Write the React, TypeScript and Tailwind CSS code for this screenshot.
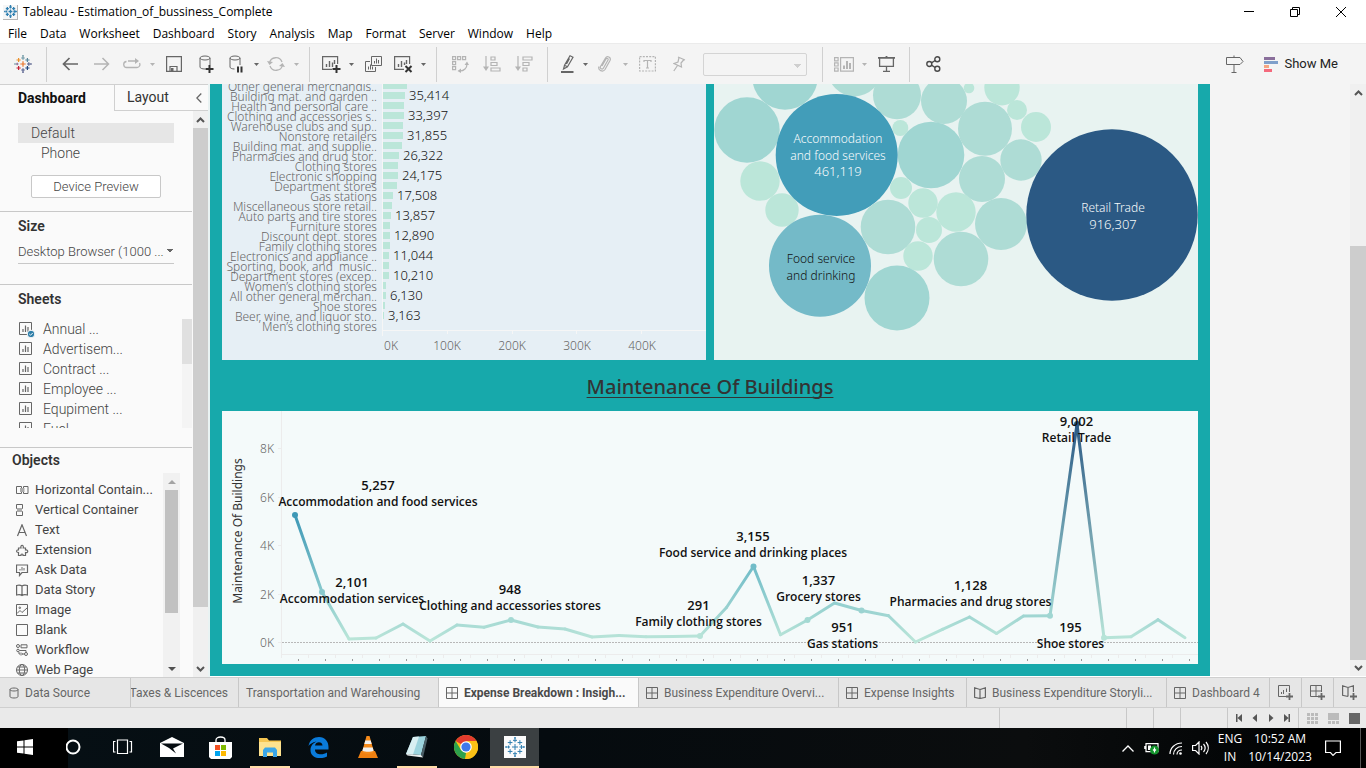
import type { ReactNode } from 'react';

/* ---------- shared icon helpers ---------- */

type Plus = [number, number, number, string];

function Pluses({ size, items, sw = 1.2 }: { size: number; items: Plus[]; sw?: number }) {
  return (
    <svg width={size} height={size} viewBox="0 0 18 18" aria-hidden="true">
      {items.map(([x, y, r, c], i) => (
        <path key={i} d={`M${x - r} ${y}h${2 * r}M${x} ${y - r}v${2 * r}`} stroke={c} strokeWidth={sw} />
      ))}
    </svg>
  );
}

const colorLogo: Plus[] = [
  [9, 9, 2.7, '#e8762c'],
  [9, 3, 1.8, '#7099a6'],
  [9, 15, 1.8, '#5b6591'],
  [3.2, 9, 1.3, '#8c6f96'],
  [14.8, 9, 1.8, '#5b6591'],
  [4.6, 5, 2.1, '#eb912c'],
  [13.4, 5, 2.1, '#59879b'],
  [4.6, 13, 2.1, '#c72035'],
  [13.4, 13, 2.1, '#1f457e'],
  [1, 9, 0.8, '#7099a6'],
  [17, 9, 0.8, '#5b6591'],
  [9, 0.8, 0.8, '#7099a6'],
  [9, 17.2, 0.8, '#5b6591'],
];
const blueLogo: Plus[] = colorLogo.map(([x, y, r]) => [x, y, r, '#2f7fb0']);

function Icon({
  w = 18,
  h = 18,
  c = '#666',
  sw = 1,
  children,
}: {
  w?: number;
  h?: number;
  c?: string;
  sw?: number;
  children: ReactNode;
}) {
  return (
    <svg
      width={w}
      height={h}
      viewBox={`0 0 ${w} ${h}`}
      fill="none"
      stroke={c}
      strokeWidth={sw}
      aria-hidden="true"
      className="shrink-0"
    >
      {children}
    </svg>
  );
}

const DIM = '#b4b4b4';
const INK = '#666666';

function Tool({ label, narrow, tight, children }: { label: string; narrow?: boolean; tight?: boolean; children: ReactNode }) {
  return (
    <button
      aria-label={label}
      className={`flex h-8 shrink-0 items-center justify-center ${tight ? 'w-6' : narrow ? 'w-7' : 'w-8'}`}
    >
      {children}
    </button>
  );
}

function Caret({ c = INK, label }: { c?: string; label: string }) {
  return (
    <button aria-label={label} className="flex h-8 w-3 shrink-0 items-center justify-center">
      <svg width="5" height="3" viewBox="0 0 5 3" aria-hidden="true">
        <path d="M0 0h5L2.5 3z" fill={c} />
      </svg>
    </button>
  );
}

const Sep = () => <div className="mx-[7px] h-[35px] w-px shrink-0 bg-[#d0d0d0]" />;

/* ---------- title, menu, toolbar ---------- */

function TitleBar() {
  return (
    <header className="flex h-6 shrink-0 items-center bg-white pr-px pl-[3px] font-['Open_Sans',sans-serif] text-[12px] text-black">
      <span className="flex size-[15px] items-center justify-center border-r border-b border-[#b5b5b5] bg-[#f6f6f6]">
        <Pluses size={13} items={blueLogo} sw={1.8} />
      </span>
      <h1 className="ml-[5px] flex-1 text-[12px]">Tableau - Estimation_of_bussiness_Complete</h1>
      <button aria-label="Minimize" className="flex h-5 w-[46px] items-center justify-center">
        <Icon w={10} h={10} c="#000"><path d="M0 4.5h10" /></Icon>
      </button>
      <button aria-label="Restore" className="flex h-5 w-[45px] items-center justify-center">
        <Icon w={10} h={10} c="#000"><path d="M.5 2.5h7v7h-7zM2.500 2.500v-2h7v7h-2" /></Icon>
      </button>
      <button aria-label="Close" className="flex h-5 w-12 items-center justify-center">
        <Icon w={10} h={10} c="#000"><path d="M0 0l10 10M10 0L0 10" /></Icon>
      </button>
    </header>
  );
}

const menus = ['File', 'Data', 'Worksheet', 'Dashboard', 'Story', 'Analysis', 'Map', 'Format', 'Server', 'Window', 'Help'];

function MenuBar() {
  return (
    <nav className="flex h-[19px] shrink-0 items-center gap-[13px] bg-white pl-2 font-['Open_Sans',sans-serif] text-[12px] text-black">
      {menus.map((m) => (
        <button key={m} className="shrink-0">{m}</button>
      ))}
    </nav>
  );
}

function Toolbar() {
  return (
    <div className="flex h-[41px] shrink-0 items-center border-t border-[#ebebeb] bg-[#f4f4f4] pr-7 pl-[7px]">
      <Tool label="Start page"><Pluses size={18} items={colorLogo} /></Tool>
      <Sep />
      <Tool label="Back">
        <Icon w={16} h={14} sw={1.7}><path d="M16 7H1.5M7.5 1L1.5 7l6 6" /></Icon>
      </Tool>
      <Tool label="Forward">
        <Icon w={16} h={14} c={DIM} sw={1.5}><path d="M0 7h14.5M8.5 1l6 6-6 6" /></Icon>
      </Tool>
      <Tool label="Replay" narrow>
        <Icon w={18} h={12} c={DIM} sw={1.3}>
          <path d="M3.500 3.500a3 3 0 0 0 .5 6h10a3 3 0 0 0 2.500-4.500M5 3h8" />
          <path d="M12 0l4 3-4 3z" fill={DIM} stroke="none" />
        </Icon>
      </Tool>
      <Caret c={DIM} label="Replay options" />
      <Tool label="Save">
        <Icon w={16} h={16} sw={1.2}>
          <path d="M.6.6h14.8v14.8H.6zM4 15v-4.500h7V15" />
          <path d="M5 12h2.5v3H5z" fill={INK} stroke="none" />
        </Icon>
      </Tool>
      <Tool label="New data source">
        <Icon w={16} h={18}>
          <path d="M2 3c0-1 2-2 5-2s5 1 5 2-2 2-5 2-5-1-5-2v9c0 1.200 2 2 5 2M12 3v7" />
          <path d="M11.500 10v8M7.500 14h8" stroke="#333" strokeWidth="2" />
        </Icon>
      </Tool>
      <Tool label="Pause auto updates" narrow>
        <Icon w={16} h={18}>
          <path d="M2 3c0-1 2-2 5-2s5 1 5 2-2 2-5 2-5-1-5-2v9c0 1.200 2 2 4.500 2M12 3v7" />
          <path d="M10 11.500v6M13.500 11.500v6" stroke="#333" strokeWidth="2" />
        </Icon>
      </Tool>
      <Caret label="Auto update options" />
      <Tool label="Run update" narrow>
        <Icon w={18} h={16} c={DIM} sw={1.3}>
          <path d="M2.500 7a6.500 6.500 0 0 1 12.500-1M15.500 9A6.500 6.500 0 0 1 3 10" />
          <path d="M0 5l2.500 4L6 6zM18 11l-2.500-4L12 10z" fill={DIM} stroke="none" />
        </Icon>
      </Tool>
      <Caret c={DIM} label="Update options" />
      <Sep />
      <Tool label="New worksheet" narrow>
        <Icon w={19} h={18} sw={1.2}>
          <path d="M10 14.400H.6V1.600h15V9" />
          <path d="M4.500 12V9M7.500 12V6M10.500 12V7.500M12.500 9V5" strokeWidth="1.400" />
          <path d="M14.500 10v8M10.500 14h8" stroke="#333" strokeWidth="2" />
        </Icon>
      </Tool>
      <Caret label="New sheet options" />
      <Tool label="Duplicate">
        <Icon w={17} h={16}>
          <path d="M6.500.5h10v9h-10zM5 5.500H.5v10h10V11M3.500 13.500v-3M5.500 13.500v-5M7.500 13.500v-3M9.500 7.500V5M11.500 7.500v-5M13.500 7.500V4" />
        </Icon>
      </Tool>
      <Tool label="Clear sheet" narrow>
        <Icon w={19} h={18} sw={1.2}>
          <path d="M10 14.400H.6V1.600h15V9" />
          <path d="M4.500 12V9M7.500 12V6M10.500 10V7.500M12.500 9V5" strokeWidth="1.400" />
          <path d="M11.500 11l6 6M17.500 11l-6 6" stroke="#333" strokeWidth="2" />
        </Icon>
      </Tool>
      <Caret label="Clear options" />
      <Sep />
      <Tool label="Swap rows and columns">
        <Icon w={17} h={17} c={DIM} sw={1.2}>
          <path d="M.6.6h3v3h-3zM5.600.6h3v3h-3zM10.600.6h3v3h-3zM.6 5.600h3v3h-3zM.6 10.600h3v3h-3zM15 8c0 4-3 7-7 7" />
          <path d="M12.500 9L15 5.500 17 9zM9 12.500L5.500 15 9 17z" fill={DIM} stroke="none" />
        </Icon>
      </Tool>
      <Tool label="Sort ascending">
        <Icon w={18} h={16} c={DIM} sw={1.2}>
          <path d="M3 0v12M8 1h4v3H8zM8 6.500h6v3H8zM8 12h9v3H8z" />
          <path d="M0 10.500h6L3 15z" fill={DIM} stroke="none" />
        </Icon>
      </Tool>
      <Tool label="Sort descending">
        <Icon w={18} h={16} c={DIM} sw={1.2}>
          <path d="M3 0v12M8 1h9v3H8zM8 6.500h6v3H8zM8 12h4v3H8z" />
          <path d="M0 10.500h6L3 15z" fill={DIM} stroke="none" />
        </Icon>
      </Tool>
      <Sep />
      <Tool label="Highlight" tight>
        <Icon w={13} h={18} sw={1.2}>
          <path d="M9 .8l3 1.500-5.500 9.500-3-1.500zM3.500 10.300L2.500 14l4-2.200M8.500 3.500l-3 5.500" />
          <path d="M0 17h12.500" strokeWidth="2" />
        </Icon>
      </Tool>
      <Caret label="Highlight options" />
      <Tool label="Group members" narrow>
        <Icon w={14} h={16} c={DIM} sw={1.2}>
          <path d="M4 10l4-7c.8-1.300 2.600-.4 2 1L5.500 12c-1 2-4 .6-3-1.500L7.500 2c1.500-2.500 6-.8 4.500 2.500L7 13.500C5 16.500-.5 14.500 1 10.500" />
        </Icon>
      </Tool>
      <Caret c={DIM} label="Group options" />
      <Tool label="Show mark labels">
        <Icon w={17} h={16} c={DIM} sw={1.2}>
          <path d="M.6.6h15.800v14.400H.6z" strokeDasharray="2 1.200" />
          <path d="M5 6V4.500h7V6M8.500 4.500v7.500M7 12h3" />
        </Icon>
      </Tool>
      <Tool label="Fix axes">
        <Icon w={13} h={16} c={DIM} sw={1.2}>
          <path d="M5 1l7 3M6 1.500L5 6 1 7.500l7.500 3.500L8 7l3-3.500M4.500 9.500L.8 15" />
        </Icon>
      </Tool>
      <select
        aria-label="Fit"
        disabled
        className="mx-2 h-[23px] w-[104px] shrink-0 appearance-none rounded-xs border border-[#d4d4d4] bg-[#f4f4f4] bg-[linear-gradient(135deg,#cfcfcf_50%,transparent_50%),linear-gradient(225deg,#cfcfcf_50%,transparent_50%)] bg-[length:4px_4px] bg-[position:94px_10px,90px_10px] bg-no-repeat"
      />
      <Sep />
      <Tool label="Show or hide cards" narrow>
        <Icon w={20} h={15} c={DIM} sw={1.2}>
          <path d="M.6.6h3.500v3.200H.6zM.6 5.800h3.500V9H.6zM.6 11h3.500v3.200H.6zM6.600.6h12.800v13.600H6.600z" />
          <path d="M10 12V8.500M13 12V4M16 12V6" strokeWidth="2" />
        </Icon>
      </Tool>
      <Caret c={DIM} label="Card options" />
      <Tool label="Presentation mode">
        <Icon w={17} h={16} sw={1.3}>
          <path d="M1.600 2v8.400h13.800V2M8.500 10.500V15M5 15.300h7" />
          <path d="M0 1.800h17M8.500 0v2" strokeWidth="1.800" />
        </Icon>
      </Tool>
      <Sep />
      <Tool label="Share">
        <Icon w={15} h={16} c="#4a4a4a" sw={1.4}>
          <circle cx="3.300" cy="8" r="2.500" />
          <circle cx="11.300" cy="3.200" r="2.500" />
          <circle cx="11.300" cy="12.800" r="2.500" />
          <path d="M5.500 6.800l3.600-2.300M5.500 9.200l3.600 2.300" />
        </Icon>
      </Tool>
      <div className="flex-1" />
      <button aria-label="Guide" className="mr-5 flex h-8 items-center">
        <Icon w={19} h={18}>
          <path d="M1.500 2.500H15L18 6.500 15 9.500H1.500zM9 .5v2M9 9.500v8M6.500 17.500h5" />
        </Icon>
      </button>
      <button className="flex h-8 items-center gap-1.5 font-['Roboto',sans-serif] text-[13px] text-[#222]">
        <svg width="14" height="15" viewBox="0 0 14 15" aria-hidden="true">
          <path d="M0 0h11v3H0z" fill="#8a6f9b" />
          <path d="M0 4h14v3H0z" fill="#7f9fca" />
          <path d="M0 8h5v3H0z" fill="#f5a582" />
          <path d="M0 12h8v3H0z" fill="#f4697c" />
        </svg>
        Show Me
      </button>
    </div>
  );
}

/* ---------- scrollbars ---------- */

function Arrow({ up }: { up?: boolean }) {
  return (
    <Icon w={9} h={7} c="#555" sw={2}>
      <path d={up ? 'M1 6l3.500-3.500L8 6' : 'M1 1l3.500 3.500L8 1'} />
    </Icon>
  );
}

/* ---------- side panel ---------- */

function SheetIcon({ checked }: { checked?: boolean }) {
  return (
    <Icon w={16} h={17} c="#666">
      <path d="M.5 1.500h12v12H.5z" />
      <path d="M4 11V8M6.500 11V4.500M9 11V6" strokeWidth="1.200" />
      {checked && (
        <>
          <circle cx="12" cy="13" r="3.800" fill="#2e7ea8" stroke="#fafafa" />
          <path d="M10.300 13l1.200 1.200 2.200-2.200" stroke="#fff" />
        </>
      )}
    </Icon>
  );
}

const sheets = ['Annual ...', 'Advertisem...', 'Contract ...', 'Employee ...', 'Equpiment ...', 'Fuel ...'];

const objects: [string, ReactNode][] = [
  ['Horizontal Contain...', <><path d="M.5 2.500h5v7h-5zM7.500 2.500h4.500v7H7.500z" /><path d="M4 4h4.500v4H4z" fill="#aaa" stroke="none" /></>],
  ['Vertical Container', <><path d="M.5.5h6v4h-6zM.5 7.500h6v4h-6z" /><path d="M1 4h5v4H1z" fill="#aaa" stroke="none" /></>],
  ['Text', <path d="M1.500 12L6 .8 10.500 12M3 8.500h6" strokeWidth="1.200" />],
  ['Extension', <path d="M2.500 11.500v-3C0 8.800 0 5.500 2.500 5.800V4H5C4 .3 8.200.3 7.200 4H9.500v2c3-.8 3 3.500 0 2.500v3H7C7.500 9.500 4.500 9.500 5 11.500z" strokeWidth="1.200" />],
  ['Ask Data', <><path d="M.5 1h11v7.500H6L3.500 11.500v-3h-3z" strokeWidth="1.200" /><path d="M4 6.500V5M6 6.500V3M8 6.500V4" stroke="#999" strokeWidth="1.500" /></>],
  ['Data Story', <path d="M6 2C4.500 1 2.500 1 .6 1.500v9.500c2-.5 4-.5 5.400.5 1.400-1 3.400-1 5.400-.5V1.500C9.500 1 7.500 1 6 2zm0 0v9.500" strokeWidth="1.200" />],
  ['Image', <><path d="M.5.5h11v11H.5zM1 9.500l3-3 2 2 5-4.500" /><circle cx="3.800" cy="3.800" r=".8" /></>],
  ['Blank', <path d="M.5.5h11v11H.5z" />],
  ['Workflow', <><circle cx="2" cy="2" r="1.500" /><circle cx="2" cy="6.500" r="1.300" /><circle cx="10" cy="10" r="1.500" /><path d="M5 .8h6v3H5zM3.500 6.500H10v2M5 10H3V8M5 8.500L6.500 10 5 11.500M8.500 10H6" /></>],
  ['Web Page', <><circle cx="6" cy="6" r="5.500" /><ellipse cx="6" cy="6" rx="2.700" ry="5.500" /><path d="M.5 6h11M1.500 3h9M1.500 9h9" /></>],
];

function SidePanel() {
  return (
    <aside className="flex w-[210px] shrink-0 flex-col border-r-2 border-[#e9f3f3] bg-[#fafafa] font-['Roboto',sans-serif] text-[#444]">
      <div role="tablist" className="flex h-[27px] shrink-0 border-t border-[#d0d0d0]">
        <button role="tab" aria-selected="true" className="w-[114px] pl-[18px] text-left text-[14px] font-bold text-[#111]">
          Dashboard
        </button>
        <button role="tab" aria-selected="false" className="flex-1 border-b border-l border-[#d0d0d0] pl-3 text-left text-[14px] text-[#333]">
          Layout
        </button>
        <button aria-label="Collapse pane" className="border-b border-[#d0d0d0] pr-1.5">
          <Icon w={6} h={10} sw={1.3}><path d="M5.300.5L.8 5l4.500 4.500" /></Icon>
        </button>
      </div>
      <div className="flex min-h-0 flex-1">
        <div className="flex min-h-0 min-w-0 flex-1 flex-col overflow-hidden">
          <div className="flex shrink-0 flex-col border-b border-[#c8c8c8] pt-3 pr-[18px] pb-[13px] pl-[18px]">
            <button className="h-5 bg-[#e6e6e6] pl-[13px] text-left text-[14px] font-light">Default</button>
            <button className="h-5 pl-[23px] text-left text-[14px] font-light">Phone</button>
            <button className="mx-[13px] mt-3 h-[23px] rounded-xs border border-[#c8c8c8] bg-white text-[13px] font-light">Device Preview</button>
          </div>
          <div className="flex h-[73px] shrink-0 flex-col border-b border-[#c8c8c8] px-[18px] pt-1">
            <h2 id="size" className="text-[14px] leading-5 font-semibold text-[#333]">Size</h2>
            <select
              aria-labelledby="size"
              className="mt-1 h-6 appearance-none border-b border-[#c8c8c8] bg-[linear-gradient(135deg,#666_50%,transparent_50%),linear-gradient(225deg,#666_50%,transparent_50%)] bg-[length:4px_4px] bg-[position:152px_9px,148px_9px] bg-no-repeat text-[13px] font-light"
            >
              <option>Desktop Browser (1000 ...</option>
            </select>
          </div>
          <div className="h-[163px] shrink-0 border-b border-[#c8c8c8] pt-1">
            <h2 className="pl-[18px] text-[14px] leading-5 font-semibold text-[#333]">Sheets</h2>
            <div className="mt-2.5 flex h-[109px] overflow-hidden">
              <ul className="flex-1 pl-[19px]">
                {sheets.map((s, i) => (
                  <li key={s} className="flex h-5 items-center gap-2 text-[14px] font-light">
                    <SheetIcon checked={i === 0} />
                    {s}
                  </li>
                ))}
              </ul>
              <div className="w-2.5 bg-[#f4f4f4]"><div className="h-[45px] bg-[#e0e0e0]" /></div>
            </div>
          </div>
          <div className="flex min-h-0 flex-1">
            <div className="min-w-0 flex-1 overflow-hidden">
              <h2 className="mt-0.5 mb-2.5 pl-3 text-[14px] leading-5 font-semibold text-[#333]">Objects</h2>
              <ul className="pl-4">
                {objects.map(([name, art]) => (
                  <li key={name} className="flex h-5 items-center gap-1.5 text-[13px] whitespace-nowrap">
                    <Icon w={13} h={13}>{art}</Icon>
                    {name}
                  </li>
                ))}
              </ul>
            </div>
            <div className="mt-[25px] mr-3 flex w-[17px] flex-col items-center bg-[#f1f1f1]">
              <svg width="8" height="17" viewBox="0 0 8 17" aria-hidden="true"><path d="M0 11h8L4 7z" fill="#a3a3a3" /></svg>
              <div className="h-[123px] w-[13px] shrink-0 bg-[#c1c1c1]" />
              <div className="flex-1" />
              <svg width="8" height="17" viewBox="0 0 8 17" aria-hidden="true"><path d="M0 7h8L4 11z" fill="#505050" /></svg>
            </div>
          </div>
        </div>
        <div className="ml-px flex w-[15px] flex-col items-center bg-[#f0f0f0]">
          <div className="flex h-[17px] items-center"><Arrow up /></div>
          <div className="w-full flex-1 bg-[#cdcdcd]" />
          <div className="flex h-[70px] items-end pb-1"><Arrow /></div>
        </div>
      </div>
    </aside>
  );
}

/* ---------- bar chart ---------- */

const bars: [string, number, string?][] = [
  ['Other general merchandis..', 24],
  ['Building mat. and garden ..', 22, '35,414'],
  ['Health and personal care ..', 21],
  ['Clothing and accessories s..', 21, '33,397'],
  ['Warehouse clubs and sup..', 20],
  ['Nonstore retailers', 20, '31,855'],
  ['Building mat. and supplie..', 19],
  ['Pharmacies and drug stor..', 16, '26,322'],
  ['Clothing stores', 15],
  ['Electronic shopping', 15, '24,175'],
  ['Department stores', 14],
  ['Gas stations', 10, '17,508'],
  ['Miscellaneous store retail..', 9],
  ['Auto parts and tire stores', 8, '13,857'],
  ['Furniture stores', 7],
  ['Discount dept. stores', 7, '12,890'],
  ['Family clothing stores', 7],
  ['Electronics and appliance ..', 6, '11,044'],
  ['Sporting, book, and  music..', 6],
  ['Department stores (excep..', 6, '10,210'],
  ['Women’s clothing stores', 3],
  ['All other general merchan..', 3, '6,130'],
  ['Shoe stores', 2],
  ['Beer, wine, and liquor sto..', 1, '3,163'],
  ['Men’s clothing stores', 0],
];

function BarChart() {
  return (
    <section className="min-w-0 flex-1 bg-[#e6eff5]">
      <svg height="276" className="block w-full font-['Noto_Sans',sans-serif] text-[12px]" role="img" aria-label="Expenditure by business">
        <path d="M160.500 0v252M160 246.500h324M225.500 246v4M290.500 246v4M354.500 246v4M419.500 246v4" stroke="#f6f6f6" fill="none" />
        {bars.map(([name, w, value], i) => (
          <g key={name}>
            <text x="155" y={7 + i * 10} textAnchor="end" fill="#666" className="font-light whitespace-pre">{name}</text>
            <rect x="161" y={i * 10 - 2} width={w} height="7" fill="#bbe6d9" />
            {value && <text x={165 + w} y={6 + i * 10} fill="#111" className="text-[13px] font-light">{value}</text>}
          </g>
        ))}
        <g fill="#666" textAnchor="middle" className="font-light">
          {['0K', '100K', '200K', '300K', '400K'].map((t, i) => (
            <text key={t} x={i === 0 ? 169 : 160 + i * 65} y="266">{t}</text>
          ))}
        </g>
      </svg>
    </section>
  );
}

/* ---------- bubble chart ---------- */

const bubbles: [number, number, number, string][] = [
  [33, 46, 32.7, '#a0d6d2'],
  [71, -7, 32.7, '#a0d6d2'],
  [140.5, -14.3, 26.7, '#aedcd5'],
  [183, 11.3, 24, '#aedcd5'],
  [230, 17, 23, '#aedcd5'],
  [255, 4, 5.3, '#bbe6d9'],
  [288, 3.7, 17.7, '#bbe6d9'],
  [303, 26, 10, '#bbe6d9'],
  [322, 43, 15, '#bbe6d9'],
  [271, 44.7, 27, '#aedcd5'],
  [217, 71, 33.3, '#a0d6d2'],
  [186.3, 44, 8, '#bbe6d9'],
  [307, 76, 20.7, '#aedcd5'],
  [268, 95, 23, '#aedcd5'],
  [46, 97, 19.7, '#bbe6d9'],
  [68, 126, 16.7, '#bbe6d9'],
  [106, 181.7, 51, '#74bac8'],
  [122.7, 71, 61, '#429db9'],
  [187, 104, 11, '#bbe6d9'],
  [209, 119, 14.7, '#bbe6d9'],
  [242, 128, 19.7, '#bbe6d9'],
  [215, 146, 13, '#bbe6d9'],
  [174, 143, 27.3, '#aedcd5'],
  [204, 172, 14.7, '#bbe6d9'],
  [247, 175, 27.3, '#aedcd5'],
  [287, 140, 26, '#aedcd5'],
  [183, 214, 32.5, '#a0d6d2'],
  [398, 131, 85.7, '#2b5984'],
];

function BubbleChart() {
  return (
    <section className="min-w-0 flex-1 bg-[#e8f3f1]">
      <svg height="276" className="block w-full font-['Noto_Sans',sans-serif] text-[12px] font-light" role="img" aria-label="Expenditure bubbles">
        {bubbles.map(([x, y, r, c]) => (
          <circle key={`${x}-${y}`} cx={x} cy={y} r={r} fill={c} />
        ))}
        <g textAnchor="middle" fill="#f7fbfc">
          <text x="124" y="59">Accommodation</text>
          <text x="124" y="76">and food services</text>
          <text x="124" y="92" className="text-[13px]">461,119</text>
          <text x="399" y="128">Retail Trade</text>
          <text x="399" y="145" className="text-[13px]">916,307</text>
        </g>
        <g textAnchor="middle" fill="#111">
          <text x="107" y="179">Food service</text>
          <text x="107" y="196">and drinking</text>
        </g>
      </svg>
    </section>
  );
}

/* ---------- line chart ---------- */

const pts: [number, number][] = [
  [73, 104], [100, 181], [127, 228], [154, 227], [181, 213], [208, 230], [235, 214], [262, 216.3],
  [289, 209], [316, 216], [343, 218], [370, 226], [397, 224.5], [424, 225.7], [451, 225.5], [478, 225],
  [504.5, 196.5], [531.5, 155.5], [558.5, 223.7], [585.5, 209], [612.5, 192], [639.5, 199.5],
  [666.5, 204.7], [693.5, 231], [720.5, 218.3], [747.5, 206], [774.5, 222.5], [801.5, 205],
  [828, 204.7], [855, 13], [882, 226.7], [909, 225.7], [936, 208.7], [963, 226.7],
];
const marked = [0, 1, 8, 15, 17, 19, 21, 28, 29, 30];

const stops: [number, number[]][] = [
  [11, [43, 89, 132]],
  [104, [62, 152, 182]],
  [156, [112, 188, 200]],
  [205, [160, 214, 210]],
  [230, [187, 230, 217]],
];

function shade(y: number) {
  let i = 0;
  while (i < stops.length - 2 && y > stops[i + 1][0]) i++;
  const [y0, a] = stops[i];
  const [y1, b] = stops[i + 1];
  const t = Math.min(1, Math.max(0, (y - y0) / (y1 - y0)));
  return `rgb(${a.map((v, k) => Math.round(v + (b[k] - v) * t)).join(',')})`;
}

const notes: [number, number, string, string][] = [
  [156, 79, '5,257', 'Accommodation and food services'],
  [130, 176, '2,101', 'Accommodation services'],
  [288, 183, '948', 'Clothing and accessories stores'],
  [476.5, 199, '291', 'Family clothing stores'],
  [531, 130, '3,155', 'Food service and drinking places'],
  [596.5, 174, '1,337', 'Grocery stores'],
  [620.5, 221, '951', 'Gas stations'],
  [748.5, 179, '1,128', 'Pharmacies and drug stores'],
  [848.5, 221, '195', 'Shoe stores'],
  [854.5, 15, '9,002', 'Retail Trade'],
];

function LineChart() {
  return (
    <section className="bg-[#f4fafa]">
      <svg height="253" className="block w-full font-['Noto_Sans',sans-serif] text-[12px]" role="img" aria-label="Maintenance of buildings">
        <defs>
          {pts.slice(1).map(([x, y], i) => (
            <linearGradient key={i} id={`seg${i}`} gradientUnits="userSpaceOnUse" x1={pts[i][0]} y1={pts[i][1]} x2={x} y2={y}>
              <stop offset="0" stopColor={shade(pts[i][1])} />
              <stop offset="1" stopColor={shade(y)} />
            </linearGradient>
          ))}
        </defs>
        <path d="M59.500 0v247M56 37.500h3M56 86.500h3M56 134.500h3M56 183.500h3M56 231.500h3M59 243.500h917" stroke="#ececec" fill="none" />
        <path d="M60 231.500h916" stroke="#b8b8b8" strokeDasharray="2 1" />
        {pts.map(([x], i) => (
          <g key={x}>
            <path d={`M${86.5 + i * 27} 243v4`} stroke="#ececec" />
            <rect x={76 + i * 27} y="248" width="1" height="2" fill="#999" />
          </g>
        ))}
        <g strokeWidth="3" strokeLinecap="round">
          {pts.slice(1).map(([x, y], i) => (
            <path key={x} d={`M${pts[i][0]} ${pts[i][1]}L${x} ${y}`} stroke={`url(#seg${i})`} />
          ))}
        </g>
        {marked.map((i) => (
          <circle key={i} cx={pts[i][0]} cy={pts[i][1]} r="3" fill={shade(pts[i][1])} />
        ))}
        <g fill="#666" textAnchor="end" className="font-light">
          {['8K', '6K', '4K', '2K', '0K'].map((t, i) => (
            <text key={t} x="52" y={42 + Math.round(i * 48.5)}>{t}</text>
          ))}
        </g>
        <text transform="translate(20 120) rotate(-90)" textAnchor="middle" fill="#333">Maintenance Of Buildings</text>
        <g fill="#111" textAnchor="middle" className="font-['Open_Sans',sans-serif] font-semibold">
          {notes.map(([x, y, v, n]) => (
            <g key={n}>
              <text x={x} y={y} className="text-[13px]">{v}</text>
              <text x={x} y={y + 16}>{n}</text>
            </g>
          ))}
        </g>
      </svg>
    </section>
  );
}

function Dashboard() {
  return (
    <main className="flex min-w-0 flex-1 overflow-hidden border-b border-white bg-[#f4f4f4]">
      <div className="flex w-[1000px] shrink-0 flex-col bg-[#17a9ab] px-3">
        <div className="flex gap-2">
          <BarChart />
          <BubbleChart />
        </div>
        <h2 className="flex h-[51px] items-center justify-center pt-0.5 font-['Noto_Sans',sans-serif] text-[20px] font-medium text-[#333] underline decoration-1 underline-offset-3 [text-decoration-skip-ink:none]">
          Maintenance Of Buildings
        </h2>
        <LineChart />
      </div>
      <div className="flex-1" />
      <div className="flex w-4 shrink-0 flex-col items-center bg-[#f0f0f0]">
        <div className="flex h-[17px] items-center"><Arrow up /></div>
        <div className="h-[145px]" />
        <div className="w-full flex-1 bg-[#cdcdcd]" />
        <div className="flex h-4 items-center"><Arrow /></div>
      </div>
    </main>
  );
}

/* ---------- sheet tabs and status bar ---------- */

const GridIcon = () => (
  <Icon w={12} h={12}><path d="M.5.5h11v11H.5zM6 0v12M0 6h12" /></Icon>
);
const BookIcon = () => (
  <Icon w={12} h={12} sw={1.2}>
    <path d="M6 2.500L.6.8v9.500L6 11.500l5.400-1.200V.8zM6 2.500v9" />
  </Icon>
);

function Tab({ width, icon, active, children }: { width: string; icon?: ReactNode; active?: boolean; children: ReactNode }) {
  return (
    <button
      role="tab"
      aria-selected={!!active}
      className={`flex shrink-0 items-center gap-1.5 overflow-hidden border-r border-[#c8c8c8] px-[7px] text-[12px] whitespace-nowrap ${width} ${
        active ? 'bg-[#fafafa] font-bold text-[#4a4a4a]' : 'text-[#666]'
      }`}
    >
      {icon}
      {children}
    </button>
  );
}

function SheetTabs() {
  return (
    <div role="tablist" className="flex h-[31px] shrink-0 border-y border-[#cfcfcf] bg-[#e6e6e6] font-['Roboto',sans-serif]">
      <Tab width="w-[131px]" icon={<Icon w={12} h={12}><path d="M3 2.500C3 .5 11 .5 11 2.500S3 4.500 3 2.500v7c0 2 8 2 8 0v-7" /></Icon>}>Data Source</Tab>
      <div className="flex w-[108px] shrink-0 items-center justify-end overflow-hidden border-r border-[#c8c8c8] pr-2.5 text-[12px] whitespace-nowrap text-[#666]">
        <button role="tab" aria-selected="false">Taxes &amp; Liscences</button>
      </div>
      <Tab width="w-[200px]">Transportation and Warehousing</Tab>
      <Tab width="w-[200px]" active icon={<GridIcon />}>Expense Breakdown : Insigh...</Tab>
      <Tab width="w-[200px]" icon={<GridIcon />}>Business Expenditure Overvi...</Tab>
      <Tab width="w-[128px]" icon={<GridIcon />}>Expense Insights</Tab>
      <Tab width="w-[200px]" icon={<BookIcon />}>Business Expenditure Storyli...</Tab>
      <Tab width="w-[103px]" icon={<GridIcon />}>Dashboard 4</Tab>
      <button aria-label="New worksheet" className="flex w-8 items-center justify-center border-r border-[#c8c8c8]">
        <Icon w={16} h={15}>
          <path d="M8 11.500H.5V.5h11V7M3.500 9V7M5.500 9V5M8.500 7V3.500" />
          <path d="M11.500 8v7M8 11.500h7" strokeWidth="1.800" />
        </Icon>
      </button>
      <button aria-label="New dashboard" className="flex w-8 items-center justify-center border-r border-[#c8c8c8]">
        <Icon w={16} h={15}>
          <path d="M8 11.500H.5V.5h11V7M6 0v11.500M0 6h12" />
          <path d="M11.500 8v7M8 11.500h7" strokeWidth="1.800" />
        </Icon>
      </button>
      <button aria-label="New story" className="flex flex-1 items-center justify-center">
        <Icon w={16} h={15}>
          <path d="M6 2.500L.6.8v9.500L6 11.500M6 2.500L11.400.8V7M6 2.500v9" strokeWidth="1.200" />
          <path d="M11.500 8v7M8 11.500h7" strokeWidth="1.800" />
        </Icon>
      </button>
    </div>
  );
}

const nav: [string, string][] = [
  ['First', 'M1 0h1.500v8H1zM7 0v8L2.500 4z'],
  ['Previous', 'M6 0v8L1.500 4z'],
  ['Next', 'M2 0v8l4.500-4z'],
  ['Last', 'M5.500 0H7v8H5.500zM1 0v8l4.500-4z'],
];

function StatusBar() {
  return (
    <div className="flex h-5 shrink-0 justify-end bg-[#eaeaea]">
      <div className="w-[127px] border-l border-[#c8c8c8]" />
      <div className="w-[27px] border-l border-[#c8c8c8]" />
      <div className="w-[27px] border-l border-[#c8c8c8]" />
      <div className="w-[47px] border-l border-[#c8c8c8]" />
      <div className="flex w-[71px] items-center justify-center gap-2 border-l border-[#c8c8c8]">
        {nav.map(([n, d]) => (
          <button key={n} aria-label={`${n} sheet`}>
            <svg width="8" height="8" viewBox="0 0 8 8" aria-hidden="true"><path d={d} fill="#555" /></svg>
          </button>
        ))}
      </div>
      <div className="flex w-[68px] items-center gap-2.5 border-l border-[#c8c8c8] pl-2">
        <button aria-label="Sheet sorter">
          <svg width="11" height="11" viewBox="0 0 11 11" aria-hidden="true"><path d="M0 0h3v3H0zM4 0h3v3H4zM8 0h3v3H8zM0 4h3v3H0zM4 4h3v3H4zM8 4h3v3H8zM0 8h3v3H0zM4 8h3v3H4zM8 8h3v3H8z" fill="#bbb" /></svg>
        </button>
        <button aria-label="Filmstrip">
          <svg width="11" height="11" viewBox="0 0 11 11" aria-hidden="true"><path d="M0 0h11v7H0zM0 8h3v3H0zM4 8h3v3H4zM8 8h3v3H8z" fill="#bbb" /></svg>
        </button>
        <button aria-label="Tabs view">
          <svg width="11" height="11" viewBox="0 0 11 11" aria-hidden="true"><path d="M0 0h11v11H0z" fill="#666" /></svg>
        </button>
      </div>
    </div>
  );
}

/* ---------- taskbar ---------- */

function Slot({ label, open, active, children }: { label: string; open?: boolean; active?: boolean; children: ReactNode }) {
  return (
    <button aria-label={label} className={`flex h-10 w-[49px] shrink-0 flex-col items-center ${active ? 'bg-[#3b4042]' : ''}`}>
      <span className="flex h-[38px] items-center justify-center">{children}</span>
      <span className={`h-0.5 ${active ? 'w-full' : 'w-10'} ${open || active ? 'bg-[#ffdca8]' : ''}`} />
    </button>
  );
}

function Taskbar() {
  return (
    <footer className="flex h-10 shrink-0 items-center bg-[linear-gradient(90deg,#000_68px,#060f14_68px,#050b0f_40%,#0b0d0e_75%,#030506_92%,#000_96%)] font-['Open_Sans',sans-serif] text-[12px] text-white">
      <Slot label="Start">
        <svg width="16" height="16" viewBox="0 0 16 16" aria-hidden="true">
          <path d="M0 2.300l6.500-.9v6.100H0zM7.500 1.200L16 0v7.500H7.500zM0 8.500h6.500v6.100L0 13.700zM7.500 8.500H16V16l-8.500-1.200z" fill="#fff" />
        </svg>
      </Slot>
      <Slot label="Cortana"><Icon w={16} h={16} c="#fff" sw={2}><circle cx="7" cy="8" r="6.500" /></Icon></Slot>
      <Slot label="Task view">
        <Icon w={20} h={16} c="#fff" sw={1.2}><path d="M4.500 1h10v13.500h-10zM2.500 2.500h-2v10.500h2M16.500 2.500h2v10.500h-2" /></Icon>
      </Slot>
      <Slot label="Mail">
        <svg width="24" height="20" viewBox="0 0 24 20" aria-hidden="true">
          <path d="M0 6L12 0l12 6v14H0z" fill="#fff" />
          <path d="M1 6.500h22L13 11.500l3 5L9 11z" fill="#060d12" />
        </svg>
      </Slot>
      <Slot label="Store">
        <svg width="23" height="23" viewBox="0 0 23 23" aria-hidden="true">
          <path d="M7 7V4c0-4 9-4 9 0v3" fill="none" stroke="#fff" strokeWidth="1.300" />
          <path d="M0 6h23v15l-2 2H2l-2-2z" fill="#fff" />
          <path d="M6 9h5v5H6z" fill="#f25022" /><path d="M12 9h5v5h-5z" fill="#7fba00" />
          <path d="M6 15h5v5H6z" fill="#00a4ef" /><path d="M12 15h5v5h-5z" fill="#ffb900" />
        </svg>
      </Slot>
      <Slot label="File Explorer" open>
        <svg width="22" height="19" viewBox="0 0 22 19" aria-hidden="true">
          <path d="M0 0h8l2 2.500h12V18H0z" fill="#f5c652" />
          <path d="M0 4h22v14H0z" fill="#fde28f" />
          <path d="M4 19v-7l2-2.500h10l2 2.500v7h-4v-4.500H8V19z" fill="#3aa6e8" />
        </svg>
      </Slot>
      <Slot label="Edge">
        <svg width="21" height="21" viewBox="0 0 21 21" aria-hidden="true">
          <path d="M.5 9C1.500 3 6 0 11 0c6 0 9.500 4.500 9.500 10v2.500H7c0 5.500 7.500 6 12 3v4C12 23 2.500 21 2.500 13c0-4 2.500-7 6-8.500C4 5.500 2 7 .5 9zM7 8.500h7.500c0-4.500-7-4.500-7.500 0z" fill="#0a7bdb" />
        </svg>
      </Slot>
      <Slot label="VLC">
        <svg width="20" height="22" viewBox="0 0 20 22" aria-hidden="true">
          <path d="M3 15h14l3 7H0z" fill="#f08010" />
          <path d="M8.500 0h3l4.500 16c-2 2.500-10 2.500-12 0z" fill="#f58a1a" />
          <path d="M7.300 4.500h5.400l1 3.500H6.300zM5.300 11.500h9.400l.9 3.200c-3 1.500-8 1.500-11.200 0z" fill="#f1f1f1" />
        </svg>
      </Slot>
      <Slot label="Notepad" open>
        <svg width="23" height="22" viewBox="0 0 23 22" aria-hidden="true">
          <path d="M8 1l13-1-5 19-15-1z" fill="#9cd3dd" />
          <path d="M8 1l6-.5L8 18.500 1 18z" fill="#d9eff2" />
          <path d="M21 0l1.500 2.500L18 21.500l-2-2.500z" fill="#4a5e66" />
          <path d="M1 18l15 1 2 2.500L2.500 19.500z" fill="#e9ecec" />
        </svg>
      </Slot>
      <Slot label="Chrome">
        <svg width="24" height="24" viewBox="0 0 24 24" aria-hidden="true">
          <circle cx="12" cy="12" r="12" fill="#fbc116" />
          <path d="M12 12L1.600 6a12 12 0 0 1 20.800 0z" fill="#e33b2e" />
          <path d="M1.600 6L7 15l5 3-1 6A12 12 0 0 1 1.600 6z" fill="#2da14c" />
          <path d="M12 6h10.400A12 12 0 0 1 11 24l6-9z" fill="#fbc116" />
          <circle cx="12" cy="12" r="5.800" fill="#fff" /><circle cx="12" cy="12" r="4.600" fill="#3f79ea" />
        </svg>
      </Slot>
      <Slot label="Tableau" active>
        <span className="flex size-[22px] items-center justify-center bg-[#fbfbfb]"><Pluses size={20} items={blueLogo} sw={0.9} /></span>
      </Slot>
      <div className="flex-1" />
      <button aria-label="Show hidden icons" className="flex w-6 justify-center">
        <Icon w={12} h={7} c="#fff" sw={1.3}><path d="M.5 6.500L6 1l5.500 5.500" /></Icon>
      </button>
      <button aria-label="Battery" className="flex w-6 justify-center">
        <Icon w={16} h={13} c="#fff" sw={1.2}>
          <path d="M2 1.600h12v8H2zM.8 4v3" />
          <path d="M4 3.500h3v4.500H4z" fill="#fff" stroke="none" />
          <circle cx="10.500" cy="8" r="4.500" fill="#12932b" stroke="none" />
          <path d="M10.500 5.500v5M9 7.500L10.500 9 12 7.500" />
        </Icon>
      </button>
      <button aria-label="Wi-Fi" className="flex w-6 justify-center">
        <Icon w={14} h={13} c="#fff" sw={1.2}>
          <path d="M1 12C1 6 6 1 13 1M4.500 12.500c0-4.500 3.500-8 8.500-8M8 12.500c0-2.500 2-4.500 5-4.500" />
          <circle cx="11.500" cy="11.500" r="1.300" fill="#fff" stroke="none" />
        </Icon>
      </button>
      <button aria-label="Volume" className="flex w-6 justify-center">
        <Icon w={17} h={14} c="#fff" sw={1.2}>
          <path d="M.6 4.500h3L7 1v12L3.600 9.500h-3zM9 5c1 1.200 1 2.800 0 4M11.500 3c2 2.400 2 5.600 0 8M14 1c3 3.600 3 8.400 0 12" />
        </Icon>
      </button>
      <button className="w-9 text-center leading-[18px]">ENG<br />IN</button>
      <time className="w-16 text-center leading-[18px] whitespace-nowrap">10:52 AM<br />10/14/2023</time>
      <button aria-label="Notifications" className="ml-1 flex w-[34px] justify-center">
        <Icon w={16} h={16} c="#fff" sw={1.2}><path d="M.6 1h14.800v11.500H11L8 15.400 5.500 12.500H.6z" /></Icon>
      </button>
      <div className="ml-2.5 h-10 w-1.5 border-l border-[#555]" />
    </footer>
  );
}

export default function App() {
  return (
    <div className="flex h-screen flex-col overflow-hidden bg-[#f4f4f4]">
      <TitleBar />
      <MenuBar />
      <Toolbar />
      <div className="flex min-h-0 flex-1">
        <SidePanel />
        <Dashboard />
      </div>
      <SheetTabs />
      <StatusBar />
      <Taskbar />
    </div>
  );
}
